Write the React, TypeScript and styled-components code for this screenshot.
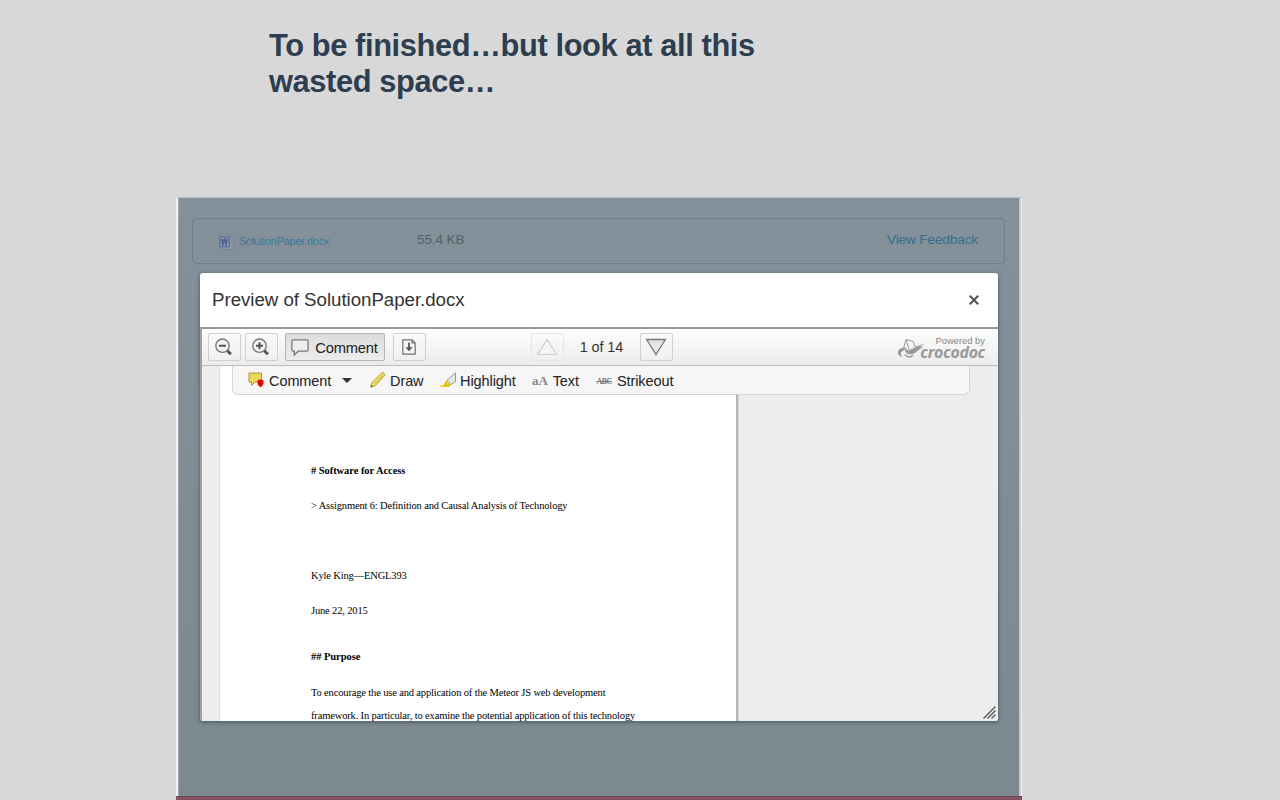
import React from 'react';
import styled, { createGlobalStyle } from 'styled-components';

const Global = createGlobalStyle`
  *, *::before, *::after { box-sizing: border-box; }
  body {
    margin: 0;
    background: #d8d8d8;
    font-family: "Liberation Sans", Arial, sans-serif;
    color: #333;
    overflow: hidden;
  }
`;

const Slide = styled.main`
  width: 1280px;
  height: 800px;
  display: flex;
  flex-direction: column;
  overflow: hidden;
`;

const Title = styled.h1`
  margin: 28px 0 0 269px;
  width: 520px;
  height: 169px;
  font-size: 30.8px;
  letter-spacing: -0.38px;
  line-height: 36px;
  font-weight: 700;
  color: #2c3e50;
`;

const Screenshot = styled.section`
  width: 846px;
  height: 603px;
  margin-left: 176px;
  display: flex;
  flex-direction: column;
`;

const Backdrop = styled.div`
  height: 599px;
  padding: 20px 13px 0 14px;
  border-top: 1px solid #b9bfc3;
  border-left: 2px solid #f2f2f2;
  border-right: 1px solid #f0f0f0;
  background: linear-gradient(#84919a, #7c8991);
  box-shadow: inset 1px 0 #9ba5ac, inset -1px 0 #cfcfcf, inset -2px 0 #c2c6c9;
`;

const Footer = styled.div`
  height: 4px;
  border-top: 1px solid #654655;
  background: #875062;
`;

const FileRow = styled.div`
  display: flex;
  align-items: center;
  height: 46px;
  width: 813px;
  padding: 0 26px 3px 26px;
  border: 1px solid #707d87;
  border-radius: 4px;
`;

const FileIcon = styled.svg`
  margin-top: 4px;
`;

const FileName = styled.span`
  width: 178px;
  margin-left: 5px;
  padding-top: 3px;
  font-size: 11px;
  letter-spacing: -0.26px;
  color: #38789b;
`;

const FileSize = styled.span`
  flex: 1;
  font-size: 13.7px;
  letter-spacing: -0.18px;
  color: #53616a;
`;

const Feedback = styled.a`
  font-size: 13.7px;
  letter-spacing: -0.18px;
  color: #356f90;
`;

const Modal = styled.div`
  width: 798px;
  height: 448px;
  margin: 9px 0 0 8px;
  border-radius: 3px;
  background: #fff;
  overflow: hidden;
  box-shadow: 0 1px 4px rgba(45, 65, 80, 0.75);
`;

const ModalHeader = styled.header`
  display: flex;
  align-items: center;
  justify-content: space-between;
  height: 54px;
  padding: 0 19px 0 12px;
  font-size: 18.7px;
  letter-spacing: -0.03px;
  color: #333;
`;

const Viewer = styled.div`
  height: 394px;
  border-top: 2px solid #999;
  border-left: 2px solid #a2a0a0;
  display: flex;
  flex-direction: column;
`;

const Toolbar = styled.div`
  flex: none;
  height: 37px;
  padding: 4px 12px 0 6px;
  display: flex;
  align-items: flex-start;
  background: linear-gradient(#fdfdfd, #ebebeb);
  border-bottom: 1px solid #bcbcbc;
`;

const ToolButton = styled.button<{ $w?: number; $gap?: number; $active?: boolean; $dim?: boolean }>`
  display: flex;
  align-items: center;
  justify-content: center;
  gap: 6px;
  flex: none;
  width: ${p => p.$w ?? 33}px;
  height: 28px;
  margin: 0 0 0 ${p => p.$gap ?? 0}px;
  padding: 1px 1px 0 0;
  border: 1px solid ${p => (p.$active ? '#b5b5b5' : p.$dim ? '#e6e6e6' : '#d0d0d0')};
  border-radius: 2px;
  background: ${p => (p.$active ? 'linear-gradient(#dcdcdc, #ececec)' : 'linear-gradient(#fafafa, #efefef)')};
  font: 14.7px "Liberation Sans", Arial, sans-serif;
  letter-spacing: -0.15px;
  color: #222;

  svg { margin-top: -1px; }
`;

const PageCount = styled.span`
  width: 76px;
  padding-right: 1px;
  text-align: center;
  font-size: 14.4px;
  line-height: 28px;
  letter-spacing: -0.08px;
  color: #333;
`;

const Brand = styled.div`
  position: relative;
  flex: 1;
  height: 28px;
  text-align: right;
  color: #999;
`;

const Powered = styled.div`
  height: 11px;
  margin-top: 2px;
  padding-right: 1px;
  font-size: 9.4px;
  line-height: 11px;
  color: #888;
`;

const BrandName = styled.div`
  height: 13px;
  padding-right: 1px;
  font: italic 700 15.9px/12px "Open Sans", "Noto Sans", sans-serif;
  letter-spacing: -0.3px;
`;

const Croc = styled.svg`
  position: absolute;
  right: 61px;
  top: 5px;
`;

const Canvas = styled.div`
  position: relative;
  flex: 1;
  min-height: 0;
  padding-left: 18px;
  background: #ededed;
  overflow: hidden;
`;

const AnnotationBar = styled.div`
  position: absolute;
  left: 30px;
  top: 0;
  width: 738px;
  height: 29px;
  padding-left: 15px;
  display: flex;
  align-items: center;
  background: #f6f6f6;
  border: 1px solid #d6d6d6;
  border-top: 0;
  border-radius: 0 0 6px 6px;
`;

const Tool = styled.span<{ $w: number; $gap: number }>`
  display: flex;
  align-items: center;
  gap: ${p => p.$gap}px;
  width: ${p => p.$w}px;
  height: 28px;
  padding-top: 2px;
  font-size: 14.5px;
  letter-spacing: -0.08px;
  color: #222;
  white-space: nowrap;

  svg { margin-top: -3px; }
`;

const TextGlyph = styled.b`
  font: 700 13px "Liberation Serif", serif;
  letter-spacing: -0.1px;
  color: #888;
`;

const StrikeGlyph = styled.s`
  font: 700 8px "Liberation Serif", serif;
  color: #777;
  letter-spacing: -0.5px;
`;

const Caret = styled.i`
  margin: -2px 0 0 6px;
  border: solid transparent;
  border-width: 5.5px 5px 0;
  border-top-color: #333;
`;

const Paper = styled.article`
  width: 516px;
  height: 100%;
  padding: 93px 0 0 91px;
  background: #fff;
  box-shadow: -1px 0 0 #dedede, 2px 0 0 #b6b6b6, 3px 0 0 #dadada;
  font: 10.5px/23px "Liberation Serif", "Times New Roman", serif;
  color: #000;
  white-space: nowrap;
`;

const Line = styled.p<{ $after: number; $bold?: boolean }>`
  margin: 0 0 ${p => p.$after}px;
  font-weight: ${p => (p.$bold ? 700 : 400)};
  letter-spacing: ${p => (p.$bold ? -0.06 : -0.155)}px;
`;

const Grip = styled.svg`
  position: absolute;
  right: 2px;
  bottom: 2px;
`;

const Zoom = ({ plus }: { plus?: boolean }) => (
  <svg width="18" height="18" viewBox="0 0 18 18" fill="none" stroke="#777">
    <circle cx="7.5" cy="7.7" r="6.7" strokeWidth="1.3" fill="#f2f2f2" />
    <path d={plus ? 'M4 7.7h7M7.5 4.2v7' : 'M4 7.7h7'} stroke="#555" strokeWidth="2" />
    <path d="M12.4 12.7l3.5 3.5" stroke="#555" strokeWidth="3" />
  </svg>
);

export default function App() {
  return (
    <Slide>
      <Global />
      <Title>To be finished…but look at all this wasted space…</Title>
      <Screenshot>
        <Backdrop>
          <FileRow>
            <FileIcon width="15" height="16" viewBox="0 0 15 16" fill="none">
              <path d="M2.5.5h9l3 3v12h-12z" stroke="#7b8699" fill="#8995a1" />
              <path d="M11.5.5v3h3" stroke="#7b8699" />
              <rect x=".7" y="2.7" width="9.6" height="10" fill="#8592a8" stroke="#5d6f9d" strokeWidth="1.2" />
              <path d="M2.8 5l1.2 5 1.5-4.5L7 10l1.3-5" stroke="#4d6195" strokeWidth="1.6" />
            </FileIcon>
            <FileName>SolutionPaper.docx</FileName>
            <FileSize>55.4 KB</FileSize>
            <Feedback>View Feedback</Feedback>
          </FileRow>
          <Modal>
            <ModalHeader>
              Preview of SolutionPaper.docx
              <svg width="10" height="10" viewBox="0 0 10 10" stroke="#555" strokeWidth="2.1">
                <path d="M.7.7l8.6 8.6M9.3.7L.7 9.3" />
              </svg>
            </ModalHeader>
            <Viewer>
              <Toolbar>
                <ToolButton><Zoom /></ToolButton>
                <ToolButton $gap={4}><Zoom plus /></ToolButton>
                <ToolButton $gap={7} $w={100} $active>
                  <svg width="18" height="17" viewBox="0 0 18 17" fill="#ededed" stroke="#777" strokeWidth="1.3">
                    <path d="M2.5.8h13q1.6 0 1.6 1.6v8.2q0 1.6-1.6 1.6H7.2L3.3 16v-3.8h-.8Q.9 12.2.9 10.6V2.4Q.9.8 2.5.8z" />
                  </svg>
                  Comment
                </ToolButton>
                <ToolButton $gap={8}>
                  <svg width="14" height="16" viewBox="0 0 14 16" fill="none" stroke="#707070" strokeWidth="1.2">
                    <path d="M.8.8h9.2l3.2 3.2v11.2H.8zM10 .8V4h3.2" />
                    <path d="M7 3.5v6" stroke="#555" strokeWidth="1.8" />
                    <path d="M3.4 8.2h7.2L7 12.2z" fill="#555" stroke="none" />
                  </svg>
                </ToolButton>
                <ToolButton $gap={105} $dim>
                  <svg width="22" height="18" viewBox="0 0 22 18"><path d="M11 1.5l9.4 15H1.6z" fill="#f5f5f5" stroke="#cfcfcf" strokeWidth="1.2" /></svg>
                </ToolButton>
                <PageCount>1 of 14</PageCount>
                <ToolButton>
                  <svg width="22" height="18" viewBox="0 0 22 18"><path d="M11 16.5l9.4-15H1.6z" fill="#e5e5e5" stroke="#777" strokeWidth="1.3" /></svg>
                </ToolButton>
                <Brand>
                  <Powered>Powered by</Powered>
                  <BrandName>crocodoc</BrandName>
                  <Croc width="28" height="21" viewBox="0 0 28 21" fill="none" stroke="#999">
                    <path d="M7.5 9C-.5 10.5-1 17 5.2 19.2 2.8 16 3.5 13.5 7.5 12z" fill="#999" stroke="none" />
                    <path d="M9 1.5l7 1.8 2.5 6.2-6 3z" fill="#f5f5f5" />
                    <path d="M9 1.5L7 8.5l4 5 1.5-1" />
                    <path d="M7.5 9.5c2 5.5 8 3 12-1L28 5.2l-5 3 4 .2-4.5 1.8 3 .3c-5 .5-6 5.5-12 5.8-4 .2-6-3-6-6.8z" fill="#999" stroke="none" />
                    <path d="M8 16.5c2.5 3.5 6 3 8 .5" strokeWidth="1.3" />
                  </Croc>
                </Brand>
              </Toolbar>
              <Canvas>
                <Paper>
                  <Line $bold $after={12}># Software for Access</Line>
                  <Line $after={47}>&gt; Assignment 6: Definition and Causal Analysis of Technology</Line>
                  <Line $after={12}>Kyle King—ENGL393</Line>
                  <Line $after={23}>June 22, 2015</Line>
                  <Line $bold $after={13}>## Purpose</Line>
                  <Line $after={0}>To encourage the use and application of the Meteor JS web development</Line>
                  <Line $after={0}>framework. In particular, to examine the potential application of this technology</Line>
                </Paper>
                <AnnotationBar>
                  <Tool $w={122} $gap={5}>
                    <svg width="16" height="16" viewBox="0 0 16 16">
                      <path d="M1 1h12.5v9H7l-3.5 3.5V10H1z" fill="#ecd95b" stroke="#b6992a" />
                      <path d="M9.5 8.3q3-1.8 6 0v3.4q-.7 2-3 3.6-2.3-1.6-3-3.6z" fill="#e00808" />
                    </svg>
                    Comment
                    <Caret />
                  </Tool>
                  <Tool $w={70} $gap={4}>
                    <svg width="16" height="16" viewBox="0 0 16 16">
                      <path d="M.8 15.2l1-4.5L11.7 1.1q1.2-.8 2.4.3t.4 2.4L5 13.9z" fill="#f1df67" stroke="#b59a2d" />
                      <path d="M4.8 11.7l8-8.2" stroke="#c9ae3a" />
                      <path d="M.8 15.2l.7-2.4 1.6 1.6z" fill="#555" />
                    </svg>
                    Draw
                  </Tool>
                  <Tool $w={92} $gap={3}>
                    <svg width="17" height="16" viewBox="0 0 17 16">
                      <path d="M15.5.8L7 8.3l3.6 4.2 4.9-2.7z" fill="#e7e7e7" stroke="#999" />
                      <path d="M6.8 8.7L4 13.6H0V15h8.2l2.7-2.2z" fill="#f2d40b" />
                      <path d="M6.8 8.7L4 13.8h4.8l2-1.3" fill="none" stroke="#c8a813" />
                    </svg>
                    Highlight
                  </Tool>
                  <Tool $w={64.5} $gap={5}><TextGlyph>aA</TextGlyph>Text</Tool>
                  <Tool $w={90} $gap={5}><StrikeGlyph>ABC</StrikeGlyph>Strikeout</Tool>
                </AnnotationBar>
                <Grip width="13" height="13" viewBox="0 0 13 13" stroke="#555" strokeWidth="1.4">
                  <path d="M.5 12.5l12-12M4.5 12.5l8-8M8.5 12.5l4-4" />
                </Grip>
              </Canvas>
            </Viewer>
          </Modal>
        </Backdrop>
        <Footer />
      </Screenshot>
    </Slide>
  );
}
